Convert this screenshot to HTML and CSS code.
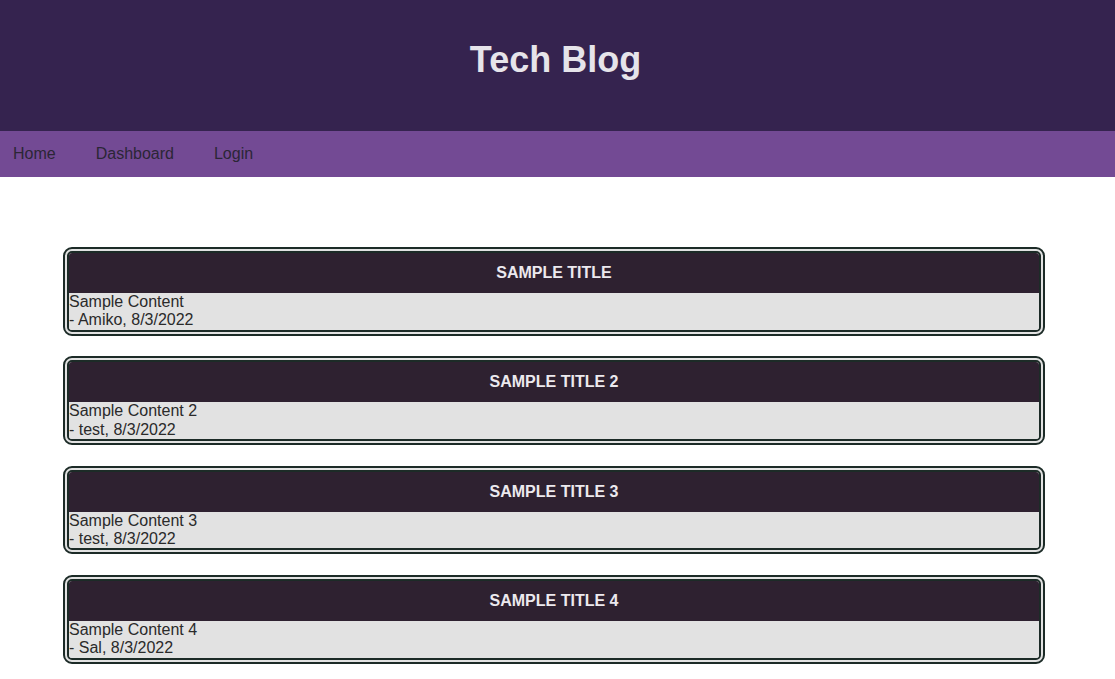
FILE: index.html
```html
<!DOCTYPE html>
<html>
<head>
<meta charset="utf-8">
<title>Tech Blog</title>
<link rel="stylesheet" href="styles.css">
</head>
<body>
<header class="site-header">
  <h1 class="site-title">Tech Blog</h1>
</header>
<nav class="site-nav">
  <a class="nav-link" href="#">Home</a>
  <a class="nav-link" href="#">Dashboard</a>
  <a class="nav-link" href="#">Login</a>
</nav>
<main class="posts">
  <article class="post">
    <h2 class="post-title">SAMPLE TITLE</h2>
    <div class="post-body">
      <p class="post-text">Sample Content</p>
      <p class="post-meta">- Amiko, 8/3/2022</p>
    </div>
  </article>
  <article class="post">
    <h2 class="post-title">SAMPLE TITLE 2</h2>
    <div class="post-body">
      <p class="post-text">Sample Content 2</p>
      <p class="post-meta">- test, 8/3/2022</p>
    </div>
  </article>
  <article class="post">
    <h2 class="post-title">SAMPLE TITLE 3</h2>
    <div class="post-body">
      <p class="post-text">Sample Content 3</p>
      <p class="post-meta">- test, 8/3/2022</p>
    </div>
  </article>
  <article class="post">
    <h2 class="post-title">SAMPLE TITLE 4</h2>
    <div class="post-body">
      <p class="post-text">Sample Content 4</p>
      <p class="post-meta">- Sal, 8/3/2022</p>
    </div>
  </article>
</main>
</body>
</html>
```

FILE: styles.css
```css
* { box-sizing: border-box; }

body {
  margin: 0;
  font-family: "Liberation Sans", Arial, sans-serif;
  font-size: 16px;
  color: #2a2a2a;
  background: #ffffff;
}

.site-header {
  height: 131px;
  background: #35234f;
  display: flex;
  align-items: center;
  justify-content: center;
}

.site-title {
  margin: 0;
  font-size: 36px;
  font-weight: bold;
  color: #e6e4ea;
  padding-bottom: 11px;
  padding-right: 4px;
}

.site-nav {
  height: 46px;
  background: #734a94;
  display: flex;
  align-items: center;
  padding-left: 13px;
  gap: 40px;
}

.nav-link {
  color: #2b2636;
  text-decoration: none;
}

.posts {
  width: 982px;
  margin: 70px 0 0 63px;
  display: flex;
  flex-direction: column;
  gap: 20.5px;
}

.post {
  border: 6px double #1c2b27;
  border-radius: 9px;
  background: #e2e2e2;
  overflow: hidden;
}

.post-title {
  margin: 0;
  background: #2e2130;
  color: #ece9ee;
  font-size: 16px;
  font-weight: bold;
  text-align: center;
  padding: 11px 0;
  line-height: 18px;
}

.post-body {
  background: #e2e2e2;
}

.post-text,
.post-meta {
  margin: 0;
  line-height: 18.4px;
}
```
